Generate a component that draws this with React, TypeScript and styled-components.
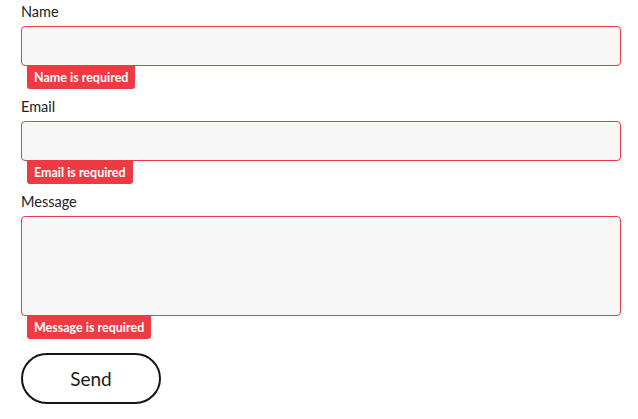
import styled, { createGlobalStyle } from "styled-components";

const GlobalStyle = createGlobalStyle`
  body {
    margin: 0;
    background: #ffffff;
    font-family: Lato, "Open Sans", sans-serif;
  }
`;

const Form = styled.form`
  display: flex;
  flex-direction: column;
  gap: 8px;
  width: 600px;
  padding: 2px 0 0 21px;
`;

const Field = styled.div`
  display: flex;
  flex-direction: column;
`;

const Label = styled.label`
  font-size: 14.5px;
  line-height: 20px;
  color: #222222;
  margin-bottom: 4px;
`;

const Input = styled.input`
  box-sizing: border-box;
  height: 40px;
  width: 100%;
  background: #f7f7f7;
  border: 1px solid #ee3a43;
  border-radius: 4px;
  padding: 0 10px;
  font: inherit;
  outline: none;
`;

const TextArea = styled.textarea`
  box-sizing: border-box;
  height: 100px;
  width: 100%;
  background: #f7f7f7;
  border: 1px solid #ee3a43;
  border-radius: 4px;
  padding: 10px;
  font: inherit;
  resize: none;
  outline: none;
  display: block;
`;

const Error = styled.span`
  align-self: flex-start;
  margin-left: 6px;
  height: 23px;
  line-height: 23px;
  padding: 0 7px;
  background: #ee3a43;
  color: #ffffff;
  font-size: 12.5px;
  font-weight: 700;
  border-radius: 0 0 3px 3px;
`;

const SendButton = styled.button`
  align-self: flex-start;
  margin-top: 6px;
  width: 140px;
  height: 51px;
  border: 2px solid #151515;
  border-radius: 26px;
  background: #ffffff;
  color: #1a1a1a;
  font-family: Lato, "Open Sans", sans-serif;
  font-size: 19px;
  cursor: pointer;
`;

function App() {
  return (
    <>
      <GlobalStyle />
      <Form onSubmit={(e) => e.preventDefault()}>
        <Field>
          <Label htmlFor="name">Name</Label>
          <Input id="name" type="text" />
          <Error>Name is required</Error>
        </Field>
        <Field>
          <Label htmlFor="email">Email</Label>
          <Input id="email" type="email" />
          <Error>Email is required</Error>
        </Field>
        <Field>
          <Label htmlFor="message">Message</Label>
          <TextArea id="message" />
          <Error>Message is required</Error>
        </Field>
        <SendButton type="submit">Send</SendButton>
      </Form>
    </>
  );
}

export default App;
